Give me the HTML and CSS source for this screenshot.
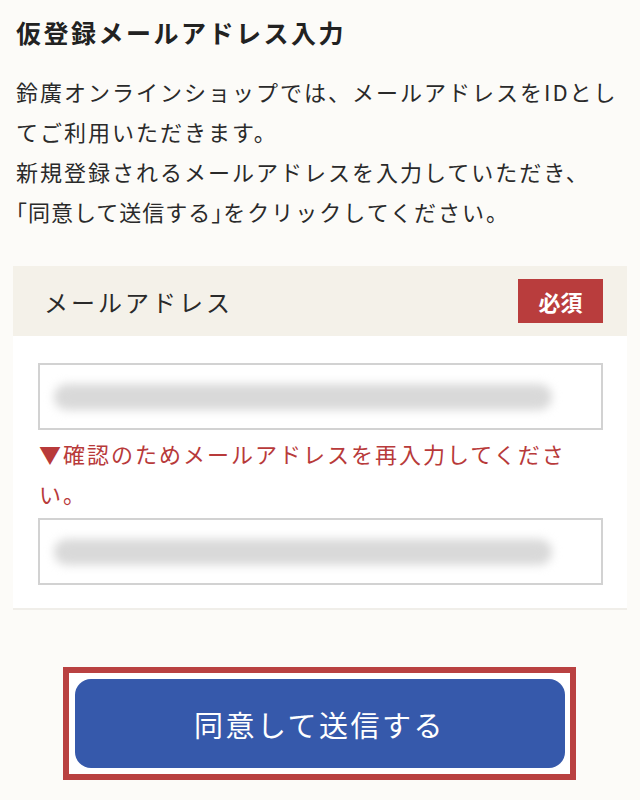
FILE: index.html
```html
<!DOCTYPE html>
<html lang="ja">
<head>
<meta charset="utf-8">
<title>仮登録メールアドレス入力</title>
<link rel="stylesheet" href="styles.css">
</head>
<body>
<main class="page">
  <h1 class="title">仮登録メールアドレス入力</h1>
  <p class="lead">鈴廣オンラインショップでは、メールアドレスをIDとしてご利用いただきます。<br>新規登録されるメールアドレスを入力していただき、<br><span class="quote">「同意して送信する」</span>をクリックしてください。</p>

  <section class="field">
    <div class="field-head">
      <span class="field-label">メールアドレス</span>
      <span class="badge">必須</span>
    </div>
    <div class="field-body">
      <div class="input"><span class="blur"></span></div>
      <p class="note">▼確認のためメールアドレスを再入力してください。</p>
      <div class="input"><span class="blur"></span></div>
    </div>
  </section>

  <div class="actions">
    <div class="highlight">
      <button class="submit" type="button">同意して送信する</button>
    </div>
  </div>
</main>
</body>
</html>
```

FILE: styles.css
```css
* { box-sizing: border-box; }
html, body {
  margin: 0;
  padding: 0;
  background: #fcfbf8;
}
body {
  font-family: "Noto Sans CJK JP", "Noto Sans", sans-serif;
  color: #2a2a2a;
}
.page {
  width: 640px;
  height: 800px;
  padding: 14px 13px 0 13px;
  overflow: hidden;
}
.title {
  margin: 0 0 21px 3px;
  font-size: 25px;
  line-height: 36px;
  font-weight: 700;
  letter-spacing: 2.5px;
  color: #222;
}
.lead {
  margin: 0 0 35px 3px;
  font-size: 22px;
  line-height: 40px;
  letter-spacing: 2px;
  color: #2a2a2a;
}
.quote {
  font-feature-settings: "halt" 1;
  letter-spacing: 1px;
}
.field {
  width: 614px;
  background: #fff;
  border-bottom: 2px solid #f0eee9;
}
.field-head {
  height: 70px;
  background: #f4f1e9;
  display: flex;
  align-items: center;
  justify-content: space-between;
  padding: 0 24px 0 31px;
}
.field-label {
  font-size: 24px;
  letter-spacing: 3px;
  color: #2a2a2a;
}
.badge {
  width: 85px;
  height: 44px;
  background: #b93d3d;
  color: #fff;
  font-weight: 700;
  font-size: 22px;
  display: flex;
  align-items: center;
  justify-content: center;
  letter-spacing: 0;
}
.field-body {
  padding: 27px 24px 23px 25px;
}
.input {
  height: 67px;
  border: 2px solid #d2d2d2;
  background: #fff;
  display: flex;
  align-items: center;
  padding-left: 14px;
}
.blur {
  display: block;
  width: 498px;
  height: 26px;
  border-radius: 13px;
  background: #d9d9d9;
  filter: blur(5px);
}
.note {
  margin: 3px 0 5px 1px;
  font-size: 22px;
  line-height: 40px;
  letter-spacing: 2px;
  color: #b83a3a;
}
.actions {
  display: flex;
  justify-content: center;
  padding-top: 57px;
  padding-right: 2px;
}
.highlight {
  border: 6px solid #b94141;
  padding: 6px 5px 6px 6px;
  background: #fff;
}
.submit {
  display: block;
  width: 490px;
  height: 89px;
  border: none;
  border-radius: 16px;
  background: #3659ab;
  color: #fff;
  font-family: "Noto Sans CJK JP", "Noto Sans", sans-serif;
  font-size: 29px;
  letter-spacing: 2.5px;
  padding: 0;
}
```
